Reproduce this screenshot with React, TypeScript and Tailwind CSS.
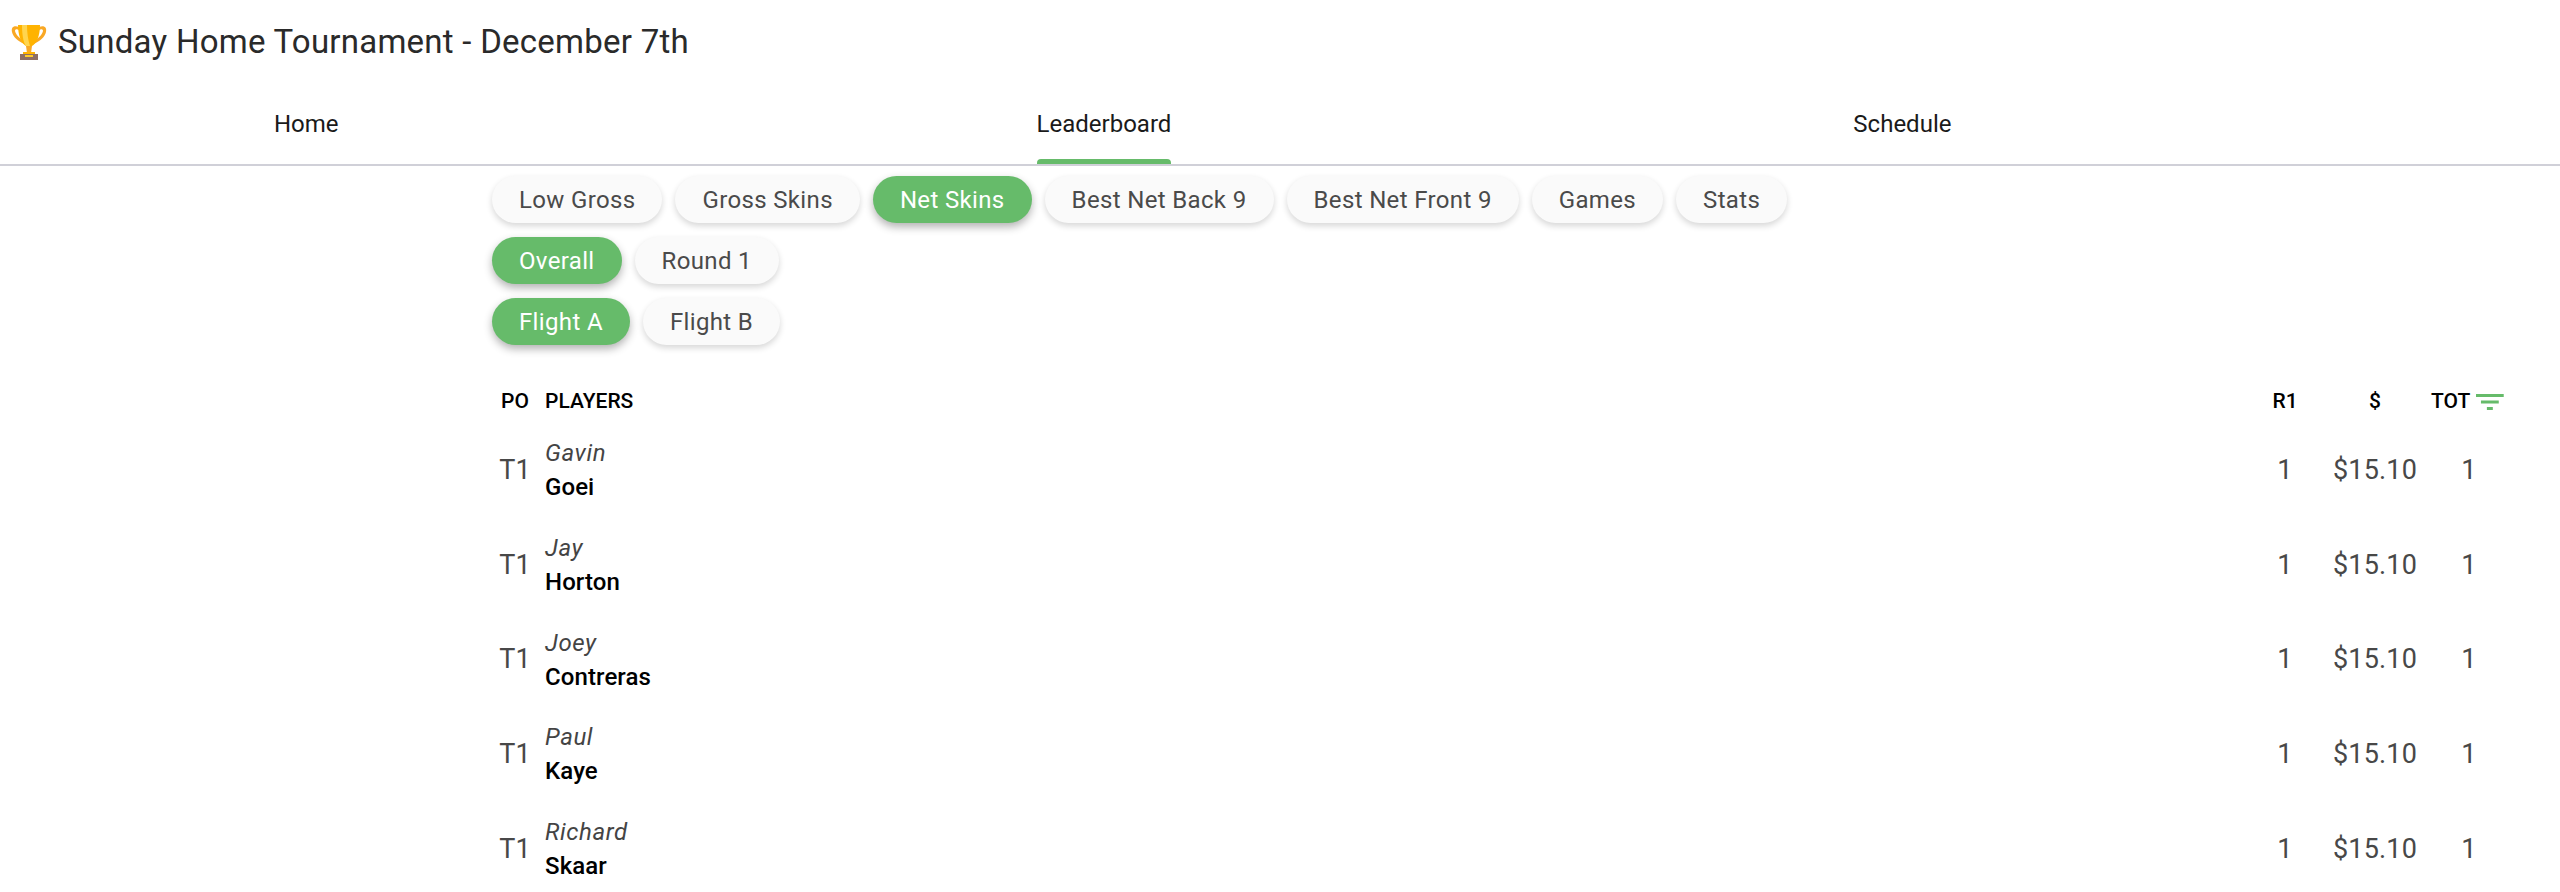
const font = { fontFamily: "Roboto, 'Liberation Sans', sans-serif" };

function Trophy() {
  return (
    <svg viewBox="0 0 38 38" className="w-[38px] h-[38px] shrink-0">
      <path d="M9 4C4 2 1 4 2 9c1 5 6 9 12 12l1-3C10 16 6 12 5 8c0-2 2-2 4-1z" fill="#f9a825" />
      <path d="M29 4c5-2 8 0 7 5-1 5-6 9-12 12l-1-3c5-2 9-6 10-10 0-2-2-2-4-1z" fill="#f9a825" />
      <path d="M8 2h22c0 10-3 18-8 21h-6C11 20 8 12 8 2z" fill="#ffb300" />
      <path d="M12 2h5c0 8 1 15 3 21h-4C13 19 12 10 12 2z" fill="#ffd54f" />
      <path d="M16 23h6l-1 7h-4z" fill="#f9a825" />
      <path d="M13 29h12v3H13z" fill="#ffb300" />
      <path d="M10 31h18v6H10z" fill="#8d6e63" />
      <path d="M15 32h8v2h-8z" fill="#ffca28" />
    </svg>
  );
}

function Chip({ label, on }: { label: string; on?: boolean }) {
  return (
    <div
      className={
        on
          ? "h-[47px] px-[27px] flex items-center rounded-[24px] bg-[#66bb6a] text-white text-[24px] tracking-[0.35px] shadow-[0_4px_8px_rgba(0,0,0,0.3)]"
          : "h-[47px] px-[27px] flex items-center rounded-[24px] bg-[#fafafa] text-[#4a4a4a] text-[24px] tracking-[0.35px] shadow-[0_3px_6px_rgba(0,0,0,0.16)]"
      }
    >
      {label}
    </div>
  );
}

function FilterIcon() {
  return (
    <svg viewBox="0 0 28 16" className="w-[28px] h-[16px] ml-[6px]">
      <path d="M0 0h28v3H0zM5 6.5h18v3H5zM11 13h6v3h-6z" fill="#66bb6a" />
    </svg>
  );
}

const players = [
  ["Gavin", "Goei"],
  ["Jay", "Horton"],
  ["Joey", "Contreras"],
  ["Paul", "Kaye"],
  ["Richard", "Skaar"],
];

export default function App() {
  return (
    <div style={font} className="w-[2560px] h-[892px] overflow-hidden bg-white text-[#212121]">
      <div className="h-[83px] flex items-center pl-[10px]">
        <Trophy />
        <span className="ml-[10px] text-[33px] tracking-[0.25px] text-[#2a2a2a]">Sunday Home Tournament - December 7th</span>
      </div>
      <div className="h-[83px] flex border-b-2 border-[#d0d0d8] text-[24px] text-[#1a1a1a]">
        <div className="ml-[274px] h-[81px] flex items-center">Home</div>
        <div className="ml-[698px] h-[81px] flex items-center relative">
          Leaderboard
          <div className="absolute left-0 right-0 bottom-0 h-[5px] rounded-t-[4px] bg-[#66bb6a]" />
        </div>
        <div className="ml-[682px] h-[81px] flex items-center">Schedule</div>
      </div>
      <div className="ml-[492px] w-[2015px] pt-[10px]">
        <div className="flex gap-[13px]">
          <Chip label="Low Gross" />
          <Chip label="Gross Skins" />
          <Chip label="Net Skins" on />
          <Chip label="Best Net Back 9" />
          <Chip label="Best Net Front 9" />
          <Chip label="Games" />
          <Chip label="Stats" />
        </div>
        <div className="flex gap-[13px] mt-[14px]">
          <Chip label="Overall" on />
          <Chip label="Round 1" />
        </div>
        <div className="flex gap-[13px] mt-[14px]">
          <Chip label="Flight A" on />
          <Chip label="Flight B" />
        </div>
        <div className="flex items-center h-[40px] mt-[37px] text-[21px] font-medium text-black">
          <div className="w-[53px] text-center pr-[7px]">PO</div>
          <div className="flex-1">PLAYERS</div>
          <div className="w-[70px] text-center pl-[2px]">R1</div>
          <div className="w-[112px] text-center">$</div>
          <div className="w-[76px] flex items-center justify-center whitespace-nowrap pr-[3px]">TOT<FilterIcon /></div>
        </div>
        <div className="pt-[1px]">
          {players.map(([first, last]) => (
            <div key={last} className="flex items-center h-[94.7px] text-[27px] font-normal tracking-[0.2px] text-[#484848]">
              <div className="w-[53px] text-center pr-[7px]">T1</div>
              <div className="flex-1 flex flex-col text-[24px] leading-[34px]">
                <span className="italic font-normal tracking-[0.6px] text-[#444444]">{first}</span>
                <span className="font-medium tracking-[0.1px] text-black">{last}</span>
              </div>
              <div className="w-[70px] text-center pl-[2px]">1</div>
              <div className="w-[112px] text-center">$15.10</div>
              <div className="w-[76px] text-center">1</div>
            </div>
          ))}
        </div>
      </div>
    </div>
  );
}
